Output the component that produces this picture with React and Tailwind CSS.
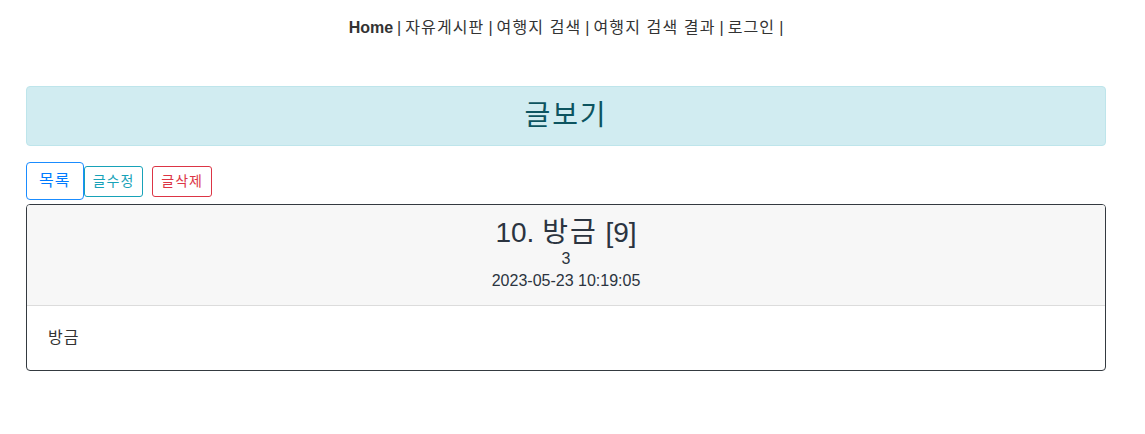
import React from "react";

const font = {
  fontFamily: '"Liberation Sans", "Noto Sans CJK KR", sans-serif',
};

// Korean glyphs in the fallback font are a touch narrower than in the original
const Ko = ({ children }) => <span className="tracking-[0.07em]">{children}</span>;

const App = () => {
  const links = ["자유게시판", "여행지 검색", "여행지 검색 결과", "로그인"];

  return (
    <div className="min-h-[434px] bg-white text-[#212529]" style={font}>
      <div className="ml-[26px] w-[1080px]">
        {/* Top nav */}
        <nav className="h-[54px] pt-[2px] flex items-center justify-center text-[16px] leading-[24px] text-[#333]">
          <a className="font-bold">Home</a>
          {links.map((l) => (
            <span key={l}>
              <span className="mx-[4px]">|</span>
              <a>
                <Ko>{l}</Ko>
              </a>
            </span>
          ))}
          <span className="ml-[4px]">|</span>
        </nav>

        {/* Title alert */}
        <div className="mt-[32px] h-[60px] flex items-center justify-center rounded-[4px] border border-[#bee5eb] bg-[#d1ecf1] text-[#0c5460] text-[28px] leading-[34px]">
          <Ko>글보기</Ko>
        </div>

        {/* Buttons */}
        <div className="mt-[16px] flex items-center h-[38px]">
          <button className="h-[38px] px-[12px] rounded-[4px] border border-[#1a8cff] text-[#007bff] text-[16px] leading-[24px]">
            <Ko>목록</Ko>
          </button>
          <button className="h-[31px] px-[8px] rounded-[3px] border border-[#17a2b8] text-[#17a2b8] text-[14px] leading-[20px]">
            <Ko>글수정</Ko>
          </button>
          <button className="ml-[9px] h-[31px] px-[8px] rounded-[3px] border border-[#dc3545] text-[#dc3545] text-[14px] leading-[20px]">
            <Ko>글삭제</Ko>
          </button>
        </div>

        {/* Card */}
        <div className="mt-[4px] rounded-[4px] border border-[#343a40] overflow-hidden">
          <div className="bg-[#f7f7f7] border-b border-[#dcdcdc] py-[13px] flex flex-col items-center text-[#2b3440]">
            <div className="text-[28px] leading-[30px]">
              10. <Ko>방금</Ko> [9]
            </div>
            <div className="text-[16px] leading-[22px]">3</div>
            <div className="text-[16px] leading-[22px]">2023-05-23 10:19:05</div>
          </div>
          <div className="px-[21px] py-[20px] text-[16px] leading-[24px] text-[#333]">
            <Ko>방금</Ko>
          </div>
        </div>
      </div>
    </div>
  );
};

export default App;
